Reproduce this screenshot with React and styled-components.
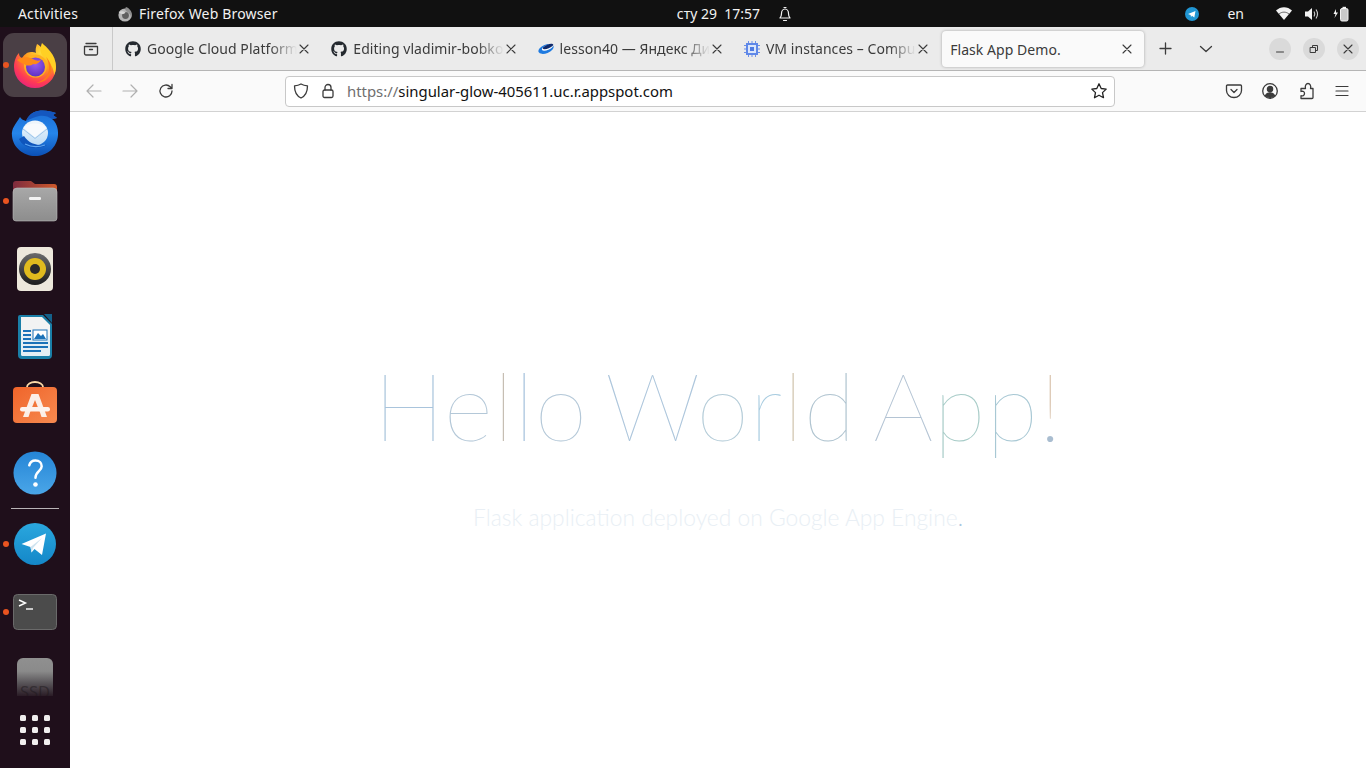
import React from 'react';
import styled, { createGlobalStyle } from 'styled-components';
import { FaGithub } from 'react-icons/fa';

const UI_FONT = '"Noto Sans", "Open Sans", sans-serif';

const GlobalStyle = createGlobalStyle`
  html, body {
    margin: 0;
    padding: 0;
    height: 100%;
    overflow: hidden;
    background: #fff;
    font-family: ${UI_FONT};
  }
  #root { height: 100%; }
  * { box-sizing: border-box; }
`;

const Screen = styled.div`
  width: 1366px;
  height: 768px;
  display: flex;
  flex-direction: column;
`;

const TopBar = styled.div`
  height: 27px;
  flex: none;
  background: #111;
  color: #f2f2f2;
  display: grid;
  grid-template-columns: 1fr auto 1fr;
  align-items: center;
  font-size: 14px;
`;

const TopLeft = styled.div`
  display: flex;
  align-items: center;
  padding-left: 18px;
  letter-spacing: 0.17px;
`;

const Activities = styled.span`
  width: 99px;
`;

const AppMenu = styled.span`
  display: flex;
  align-items: center;
  gap: 6px;
`;

const Clock = styled.div`
  display: flex;
  align-items: center;
  gap: 17px;
  padding-left: 104px;
`;

const TopRight = styled.div`
  display: flex;
  align-items: center;
  justify-content: flex-end;
  padding-right: 17px;
`;

const Lang = styled.span`
  margin: 0 32px 0 28px;
`;

const TrayGap = styled.span`
  display: flex;
  margin-left: ${(p) => p.$left || 0}px;
`;

const Body = styled.div`
  flex: 1;
  display: flex;
  min-height: 0;
`;

const Dock = styled.div`
  width: 70px;
  flex: none;
  background: #1f0f1b;
  padding-top: 4px;
  display: flex;
  flex-direction: column;
  align-items: center;
`;

const DockItem = styled.div`
  position: relative;
  width: 70px;
  height: ${(p) => p.$height || 68}px;
  flex: none;
  display: flex;
  align-items: ${(p) => p.$align || 'center'};
  justify-content: center;
  overflow: hidden;
`;

const ActiveTile = styled.div`
  width: 64px;
  height: 64px;
  border-radius: 11px;
  background: #4a3f45;
  display: flex;
  align-items: center;
  justify-content: center;
`;

const RunDot = styled.span`
  position: absolute;
  left: 3px;
  top: 50%;
  width: 6px;
  height: 6px;
  margin-top: -3px;
  border-radius: 50%;
  background: #e95420;
`;

const DockSep = styled.div`
  width: 48px;
  height: 1px;
  margin: 1px 0 1px;
  flex: none;
  background: #b9b4b7;
`;

const AppGrid = styled.div`
  display: grid;
  grid-template-columns: repeat(3, 6px);
  gap: 6px;
  & > span {
    width: 6px;
    height: 6px;
    border-radius: 1.5px;
    background: #f0eeee;
  }
`;

const SsdTile = styled.div`
  width: 36px;
  height: 38px;
  margin-top: 12px;
  border-radius: 6px 6px 0 0;
  background: linear-gradient(#909090 0%, #8a8a8a 35%, #5a565a 65%, #2a1c26 100%);
  color: rgba(30, 24, 28, 0.5);
  font-size: 16.5px;
  line-height: 20px;
  padding: 24px 0 0 3px;
  white-space: nowrap;
  overflow: hidden;
`;

const Browser = styled.div`
  flex: 1;
  min-width: 0;
  display: flex;
  flex-direction: column;
`;

const TabBar = styled.div`
  height: 44px;
  flex: none;
  background: #ebebeb;
  border-bottom: 1px solid #b5b5b5;
  display: flex;
  align-items: center;
  color: #3b3b3b;
  font-size: 14px;
`;

const ViewButton = styled.div`
  width: 43px;
  height: 43px;
  flex: none;
  border-right: 1px solid #c9c9c9;
  display: flex;
  align-items: center;
  justify-content: center;
`;

const TabList = styled.div`
  display: flex;
  padding-left: 5px;
  height: 43px;
`;

const Tab = styled.div`
  width: 206.3px;
  flex: none;
  display: flex;
  align-items: center;
  padding: 0 15px 0 7px;
  gap: 6px;
  position: relative;
`;

const ActiveTab = styled(Tab)`
  width: 202px;
  height: 36px;
  margin: 4px 0 0 -1px;
  padding: 0 12px 0 8px;
  background: #fafafa;
  border-radius: 4px;
  box-shadow: 0 0 3px rgba(0, 0, 0, 0.3);
`;

const TabTitle = styled.span`
  flex: 1;
  min-width: 0;
  margin-right: ${(p) => (p.$fade ? -4 : 0)}px;
  white-space: nowrap;
  overflow: hidden;
  letter-spacing: 0.05px;
  -webkit-mask-image: ${(p) =>
    p.$fade ? 'linear-gradient(to right, #000 82%, transparent 100%)' : 'none'};
  mask-image: ${(p) =>
    p.$fade ? 'linear-gradient(to right, #000 82%, transparent 100%)' : 'none'};
`;

const Favicon = styled.span`
  width: 16px;
  height: 16px;
  flex: none;
  display: flex;
  align-items: center;
  justify-content: center;
  color: #24292f;
`;

const TabActions = styled.div`
  display: flex;
  align-items: center;
  margin-left: 15px;
  gap: 27px;
`;

const WindowButtons = styled.div`
  margin-left: auto;
  padding-right: 7px;
  display: flex;
  gap: 12px;
`;

const WinButton = styled.span`
  width: 22px;
  height: 22px;
  border-radius: 50%;
  background: #dadada;
  display: flex;
  align-items: center;
  justify-content: center;
`;

const Toolbar = styled.div`
  height: 41px;
  flex: none;
  background: #fafafa;
  border-bottom: 1px solid #d2d2d2;
  display: flex;
  align-items: center;
  padding-left: 15px;
`;

const NavButtons = styled.div`
  display: flex;
  align-items: center;
  gap: 18px;
  width: 200px;
`;

const UrlBar = styled.div`
  width: 830px;
  height: 31px;
  background: #fff;
  border: 1px solid #c8c8c8;
  border-radius: 4px;
  display: flex;
  align-items: center;
  padding: 0 6px;
  font-size: 14.9px;
`;

const UrlIcons = styled.span`
  display: flex;
  align-items: center;
  gap: 10px;
  margin-right: 11px;
`;

const UrlText = styled.span`
  flex: 1;
  color: #111;
`;

const UrlScheme = styled.span`
  color: #6f6f6f;
`;

const ToolRight = styled.div`
  display: flex;
  align-items: center;
  gap: 18px;
  margin-left: 110px;
`;

const Page = styled.main`
  flex: 1;
  background: #fff;
  display: flex;
  flex-direction: column;
  align-items: center;
  padding: 236px 0 0 0;
  font-family: Lato, sans-serif;
`;

const Heading = styled.h1`
  margin: 0;
  font-size: 95px;
  line-height: 113px;
  font-weight: 100;
  letter-spacing: 0.8px;
  word-spacing: -8px;
  white-space: nowrap;
`;

const Letter = styled.span`
  color: ${(p) => p.$color};
`;

const Bang = styled.span`
  color: transparent;
  background: linear-gradient(#dcc8b4 68%, #a9bdd0 68%);
  -webkit-background-clip: text;
  background-clip: text;
`;

const Subtitle = styled.p`
  margin: 42px 0 0;
  font-size: 22.8px;
  line-height: 29px;
  font-weight: 300;
  color: #e9eff5;
  white-space: nowrap;
`;

const Dot = styled.span`
  color: #a9c6e0;
`;

const Ico = ({ size = 16, children, vb = '0 0 16 16', color = '#3b3b3b', sw = 1.3 }) => (
  <svg width={size} height={size} viewBox={vb} fill="none" stroke={color} strokeWidth={sw} strokeLinecap="round" strokeLinejoin="round">
    {children}
  </svg>
);

const CloseX = ({ color = '#3b3b3b' }) => (
  <Ico size={10} vb="0 0 10 10" color={color} sw={1.1}>
    <path d="M1 1l8 8M9 1l-8 8" />
  </Ico>
);

const Firefox = ({ size = 48 }) => (
  <svg width={size} height={size} viewBox="0 0 48 48">
    <defs>
      <radialGradient id="ffBody" cx="0.65" cy="0.2" r="0.95">
        <stop offset="0" stopColor="#ffde3a" />
        <stop offset="0.4" stopColor="#ff9a1f" />
        <stop offset="0.72" stopColor="#ff3a55" />
        <stop offset="1" stopColor="#d9188f" />
      </radialGradient>
      <radialGradient id="ffGlobe" cx="0.5" cy="0.35" r="0.7">
        <stop offset="0" stopColor="#9a5cf0" />
        <stop offset="1" stopColor="#5b2fc0" />
      </radialGradient>
    </defs>
    <path d="M26 3c5 3 6 6 9 8 6 4 10 9 10 15a21 21 0 1 1-42 0c0-6 2-11 5-14 0 3 1 4 3 5 2-3 5-6 9-6 2 0 4 0 5 1-1-3 0-6 1-9z" fill="url(#ffBody)" />
    <path d="M31 2c4 4 14 11 14 24 0 3-1 6-2 8 0-9-6-14-11-19-3-3-3-8-1-13z" fill="#ffd024" />
    <circle cx="24.5" cy="25" r="11.5" fill="#ffb11f" />
    <circle cx="24.5" cy="26" r="9.5" fill="url(#ffGlobe)" />
    <path d="M6 19c4-3 11-4 16-1 3 2 5 2 8 1-2 3-5 5-8 4-2 2-6 2-9 0-2-1-5-2-7-4z" fill="#ff8a18" />
    <path d="M35 16c4 4 6 9 5 15-2 7-8 11-15 11 8-2 13-8 13-15 0-4-1-8-3-11z" fill="#ff7a1c" />
  </svg>
);

const MiniFirefox = () => (
  <svg width={16} height={16} viewBox="0 0 16 16">
    <circle cx="8" cy="9" r="6.6" fill="#b5b5b5" />
    <path d="M9 1c3 1 6 4 6 8 0 1-1 3-1 3 0-4-3-6-5-7-1-1-1-3 0-4z" fill="#8e8e8e" />
    <circle cx="8.5" cy="9.5" r="3.4" fill="#5f5f5f" />
    <path d="M1.5 6c2-1 5-1 7 .5-1 1.5-3 2-5 1z" fill="#d6d6d6" />
  </svg>
);

const Thunderbird = () => (
  <svg width={50} height={50} viewBox="0 0 50 50">
    <defs>
      <linearGradient id="tbBody" x1="0" y1="0" x2="0" y2="1">
        <stop offset="0" stopColor="#1c6fd6" />
        <stop offset="0.5" stopColor="#2585ea" />
        <stop offset="1" stopColor="#0b50b6" />
      </linearGradient>
      <linearGradient id="tbMail" x1="0" y1="0" x2="0" y2="1">
        <stop offset="0" stopColor="#f2f7fb" />
        <stop offset="1" stopColor="#bcdcf6" />
      </linearGradient>
    </defs>
    <path d="M10 9C6 16 1 20 2 28c1 12 12 20 23 20 12 0 22-8 23-21 .5-7-2-13-6-16l5-1-4-3 3-2c-6-2-12-3-18-2-6 1-10 5-12 10-3-1-5-2-6-4z" fill="url(#tbBody)" />
    <path d="M16 13c2-5 6-9 12-10 6-1 12 0 18 2l-3 2 4 3-5 1c-4-3-9-4-13-3-5 1-9 3-13 5z" fill="#1457bf" />
    <ellipse cx="25" cy="25" rx="13" ry="12.5" fill="url(#tbMail)" />
    <path d="M13.500 20C17 14 33 14 36.500 20L25 29.500z" fill="#f7fafd" />
    <path d="M13 21l12 9.500L37 21" fill="none" stroke="#9fc6ea" strokeWidth="1" />
    <path d="M9 31c4 9 17 12 28 6-9 1-18-1-23-9z" fill="#0f55bc" />
    <path d="M15 36c6 3 14 3 20 1" fill="none" stroke="#5fa8f2" strokeWidth="1.200" />
  </svg>
);

const Files = () => (
  <svg width={46} height={42} viewBox="0 0 46 42">
    <defs>
      <linearGradient id="fld" x1="0" y1="0" x2="1" y2="0">
        <stop offset="0" stopColor="#7e2b3e" />
        <stop offset="1" stopColor="#cf5a2c" />
      </linearGradient>
      <linearGradient id="fldBody" x1="0" y1="0" x2="0" y2="1">
        <stop offset="0" stopColor="#a8a8a8" />
        <stop offset="1" stopColor="#8d8d8d" />
      </linearGradient>
    </defs>
    <path d="M1 4a3 3 0 0 1 3-3h15l4 3h19a3 3 0 0 1 3 3v8H1z" fill="url(#fld)" />
    <path d="M1 12a4 4 0 0 1 4-4h36a4 4 0 0 1 4 4v26a3 3 0 0 1-3 3H4a3 3 0 0 1-3-3z" fill="url(#fldBody)" stroke="#bdbdbd" strokeWidth="0.6" />
    <rect x="17" y="17" width="12" height="3" rx="1.2" fill="#f4f4f4" />
  </svg>
);

const Rhythmbox = () => (
  <svg width={36} height={44} viewBox="0 0 36 44">
    <defs>
      <linearGradient id="rbRing" x1="0" y1="0" x2="0" y2="1">
        <stop offset="0" stopColor="#6b6b6b" />
        <stop offset="1" stopColor="#1d1d1d" />
      </linearGradient>
    </defs>
    <rect width="36" height="44" rx="4" fill="#ede8dc" />
    <circle cx="18" cy="22" r="16" fill="url(#rbRing)" />
    <circle cx="18" cy="22" r="11" fill="#e0bb1e" />
    <circle cx="18" cy="22" r="5" fill="#2a2a2a" />
  </svg>
);

const Writer = () => (
  <svg width={36} height={46} viewBox="0 0 36 46">
    <path d="M3 1h23l9 9v31a4 4 0 0 1-4 4H5a4 4 0 0 1-4-4V3a2 2 0 0 1 2-2z" fill="#1a7fa8" />
    <path d="M4 3h21l8 8v29a2 2 0 0 1-2 2H6a2 2 0 0 1-2-2z" fill="#f2f3f3" />
    <path d="M4 22h29v18a2 2 0 0 1-2 2H6a2 2 0 0 1-2-2z" fill="#e4eef4" />
    <path d="M27 0h8v9z" fill="#14618a" />
    <g fill="#1b72b8">
      <rect x="6" y="16" width="8" height="2" />
      <rect x="6" y="20" width="8" height="2" />
      <rect x="6" y="24" width="8" height="2" />
      <rect x="6" y="28" width="25" height="2" />
      <rect x="6" y="32" width="25" height="2" />
      <rect x="6" y="36" width="18" height="2" />
    </g>
    <rect x="16" y="16" width="14" height="10" fill="#fff" stroke="#1b72b8" strokeWidth="1" />
    <path d="M17 25l4-6 3 3 2-2 3 5z" fill="#1b72b8" />
  </svg>
);

const Software = () => (
  <svg width={46} height={48} viewBox="0 0 46 48">
    <defs>
      <linearGradient id="swBg" x1="0" y1="0" x2="1" y2="1">
        <stop offset="0" stopColor="#f0642a" />
        <stop offset="1" stopColor="#f68a50" />
      </linearGradient>
    </defs>
    <path d="M15 7V6a8 5 0 0 1 16 0v1" fill="none" stroke="#fad9a8" strokeWidth="1.800" />
    <rect x="1" y="6" width="44" height="36" rx="4" fill="url(#swBg)" />
    <path d="M19.500 13h7L35 36h-5.500l-2-6h-9l-2 6H11z" fill="#fbeee7" />
    <path d="M23 19l-2.800 7h5.600z" fill="#f2763a" />
    <rect x="8" y="26" width="30" height="4.500" rx="2.200" fill="#fdf3ee" />
  </svg>
);

const Help = () => (
  <svg width={44} height={44} viewBox="0 0 46 46">
    <defs>
      <linearGradient id="hpBg" x1="0" y1="0" x2="0" y2="1">
        <stop offset="0" stopColor="#2585d6" />
        <stop offset="1" stopColor="#4aa6e8" />
      </linearGradient>
    </defs>
    <circle cx="23" cy="23" r="22.500" fill="url(#hpBg)" />
    <path d="M17 15c1-4 4-5 6.500-5 4 0 6.500 2.500 6.500 6 0 5-6.500 5.500-6.500 12" fill="none" stroke="#fff" strokeWidth="2.600" strokeLinecap="round" />
    <circle cx="23.500" cy="35" r="2.400" fill="#fff" />
  </svg>
);

const TelegramDock = () => (
  <svg width={42} height={42} viewBox="0 0 42 42">
    <defs>
      <linearGradient id="tgBg" x1="0" y1="0" x2="0" y2="1">
        <stop offset="0" stopColor="#2aa7de" />
        <stop offset="1" stopColor="#1487c8" />
      </linearGradient>
    </defs>
    <circle cx="21" cy="21" r="21" fill="url(#tgBg)" />
    <path d="M7.500 21L32 10.500 28 32 20.500 26 17.500 29.500 16.500 24z" fill="#fff" />
    <path d="M16.500 24L28 15 19 25 17.500 29.500z" fill="#cfe4f0" />
  </svg>
);

const Terminal = () => (
  <svg width={44} height={36} viewBox="0 0 44 36">
    <rect x="0.500" y="0.500" width="43" height="35" rx="4" fill="#4b4b4b" stroke="#6a6a6a" />
    <path d="M6 6l6.500 3L6 12" fill="none" stroke="#fff" strokeWidth="1.400" />
    <path d="M13 15h7" stroke="#fff" strokeWidth="1.400" />
  </svg>
);

const TelegramTray = () => (
  <svg width={14} height={14} viewBox="0 0 14 14">
    <circle cx="7" cy="7" r="7" fill="#2196d3" />
    <path d="M3 7l7.500-3-1.200 6.500L7 8.800 6 10 5.600 8z" fill="#fff" />
  </svg>
);

const Bell = () => (
  <Ico size={16} color="#f2f2f2" sw={1.2}>
    <path d="M3 12c1-1 1.500-2 1.500-4.500C4.500 5 6 3 8 3s3.500 2 3.500 4.500C11.500 10 12 11 13 12z" />
    <path d="M7 1.500h2M6.500 14.500h3" />
  </Ico>
);

const Wifi = () => (
  <svg width={16} height={13} viewBox="0 0 16 13">
    <path d="M0 3.500C4.500-1 11.500-1 16 3.500L8 13z" fill="#f2f2f2" />
    <path d="M3 7c3-2.500 7-2.500 10 0" fill="none" stroke="#111" strokeWidth="0.600" />
  </svg>
);

const Volume = () => (
  <svg width={16} height={14} viewBox="0 0 16 14">
    <path d="M1 4.500h3L8 1v12L4 9.500H1z" fill="#f2f2f2" />
    <path d="M10 4.500c1 1.500 1 3.500 0 5M12 2.500c2 3 2 6 0 9" fill="none" stroke="#d0d0d0" strokeWidth="1.100" />
  </svg>
);

const Battery = () => (
  <svg width={16} height={16} viewBox="0 0 16 16">
    <path d="M3 3L0.500 8H2.500L1.500 12 5 6.500H3z" fill="#f2f2f2" />
    <rect x="7.500" y="2.500" width="7.500" height="12.500" rx="1.500" fill="#c9c9c9" stroke="#f2f2f2" />
    <rect x="9.500" y="0.800" width="3.500" height="1.500" fill="#f2f2f2" />
  </svg>
);

const YandexDisk = () => (
  <svg width={16} height={12} viewBox="0 0 16 12">
    <ellipse cx="8" cy="6" rx="8" ry="4.200" transform="rotate(-22 8 6)" fill="#1e7ae0" />
    <ellipse cx="9.500" cy="4.500" rx="6" ry="2.400" transform="rotate(-22 9.500 4.500)" fill="#fff" />
    <ellipse cx="10" cy="3.500" rx="5.600" ry="1.800" transform="rotate(-22 10 3.500)" fill="#102a6c" />
  </svg>
);

const ChipIcon = () => (
  <svg width={16} height={16} viewBox="0 0 16 16">
    <g stroke="#6d8fe8" strokeWidth="1">
      <path d="M4.500 0v16M8 0v16M11.500 0v16M0 4.500h16M0 8h16M0 11.500h16" />
    </g>
    <rect x="2" y="2" width="12" height="12" fill="#5f88e8" />
    <rect x="4" y="4" width="8" height="8" fill="#dbe6fb" />
    <rect x="6" y="6" width="4" height="4" fill="#4f7be2" />
  </svg>
);

const tabs = [
  { title: 'Google Cloud Platform', icon: <FaGithub size={16} /> },
  { title: 'Editing vladimir-bobko', icon: <FaGithub size={16} /> },
  { title: 'lesson40 — Яндекс Диск', icon: <YandexDisk /> },
  { title: 'VM instances – Compute', icon: <ChipIcon /> },
];

const heading = [
  ['H', '#a9c4dc'], ['e', '#b4c8d8'], ['l', '#c4bcb0'], ['l', '#a4c0dc'], ['o', '#b4c8d8'],
  [' ', '#fff'], ['W', '#adc6dc'], ['o', '#b4ccd8'], ['r', '#a8cce0'], ['l', '#d0c4ac'], ['d', '#b0c4d0'],
  [' ', '#fff'], ['A', '#b4c4d4'], ['p', '#a8ccc8'], ['p', '#a8c8d4'],
];

export default function App() {
  return (
    <Screen>
      <GlobalStyle />
      <TopBar>
        <TopLeft>
          <Activities>Activities</Activities>
          <AppMenu>
            <MiniFirefox />
            Firefox Web Browser
          </AppMenu>
        </TopLeft>
        <Clock>
          <span>сту 29 &nbsp;17:57</span>
          <Bell />
        </Clock>
        <TopRight>
          <TelegramTray />
          <Lang>en</Lang>
          <Wifi />
          <TrayGap $left={12}><Volume /></TrayGap>
          <TrayGap $left={13}><Battery /></TrayGap>
        </TopRight>
      </TopBar>
      <Body>
        <Dock>
          <DockItem>
            <ActiveTile><Firefox /></ActiveTile>
            <RunDot />
          </DockItem>
          <DockItem><Thunderbird /></DockItem>
          <DockItem><Files /><RunDot /></DockItem>
          <DockItem><Rhythmbox /></DockItem>
          <DockItem><Writer /></DockItem>
          <DockItem><Software /></DockItem>
          <DockItem><Help /></DockItem>
          <DockSep />
          <DockItem><TelegramDock /><RunDot /></DockItem>
          <DockItem><Terminal /><RunDot /></DockItem>
          <DockItem $height={50} $align="flex-start"><SsdTile>SSD</SsdTile></DockItem>
          <DockItem>
            <AppGrid>
              {Array.from({ length: 9 }).map((_, i) => <span key={i} />)}
            </AppGrid>
          </DockItem>
        </Dock>
        <Browser>
          <TabBar>
            <ViewButton>
              <Ico size={16}>
                <path d="M3 2.500h10M1.500 5.500h13v7a1.500 1.500 0 0 1-1.500 1.500H3a1.500 1.500 0 0 1-1.500-1.500zM6.500 8.500h3" />
              </Ico>
            </ViewButton>
            <TabList>
              {tabs.map((t) => (
                <Tab key={t.title}>
                  <Favicon>{t.icon}</Favicon>
                  <TabTitle $fade>{t.title}</TabTitle>
                  <CloseX />
                </Tab>
              ))}
              <ActiveTab>
                <TabTitle>Flask App Demo.</TabTitle>
                <CloseX />
              </ActiveTab>
            </TabList>
            <TabActions>
              <Ico size={13} vb="0 0 13 13">
                <path d="M6.500 1v11M1 6.500h11" />
              </Ico>
              <Ico size={14} vb="0 0 14 14">
                <path d="M1.500 4.500L7 9.500l5.500-5" />
              </Ico>
            </TabActions>
            <WindowButtons>
              <WinButton>
                <Ico size={10} vb="0 0 10 10" sw={1}><path d="M1.500 8h7" /></Ico>
              </WinButton>
              <WinButton>
                <Ico size={10} vb="0 0 10 10" sw={1}>
                  <path d="M1.500 3.500h5v5h-5zM3.500 3.500v-2h5v5h-2" />
                </Ico>
              </WinButton>
              <WinButton>
                <CloseX />
              </WinButton>
            </WindowButtons>
          </TabBar>
          <Toolbar>
            <NavButtons>
              <Ico size={18} vb="0 0 18 18" color="#b0b0b0" sw={1.2}>
                <path d="M16 9H2M8 3L2 9l6 6" />
              </Ico>
              <Ico size={18} vb="0 0 18 18" color="#b0b0b0" sw={1.2}>
                <path d="M2 9h14M10 3l6 6-6 6" />
              </Ico>
              <Ico size={18} vb="0 0 18 18" sw={1.3}>
                <path d="M15 9a6 6 0 1 1-1.800-4.300L15 6.500M15 2.500v4h-4" />
              </Ico>
            </NavButtons>
            <UrlBar>
              <UrlIcons>
                <Ico size={18} vb="0 0 18 18">
                  <path d="M9 2c2 1.200 4 1.700 6.500 1.800C15.500 10 13.500 14 9 16 4.500 14 2.500 10 2.500 3.800 5 3.700 7 3.200 9 2z" />
                </Ico>
                <Ico size={16}>
                  <rect x="3" y="7" width="10" height="7.500" rx="1.500" />
                  <path d="M5 7V4.500a3 3 0 0 1 6 0V7" />
                </Ico>
              </UrlIcons>
              <UrlText>
                <UrlScheme>https://</UrlScheme>singular-glow-405611.uc.r.appspot.com
              </UrlText>
              <Ico size={18} vb="0 0 18 18" color="#222">
                <path d="M9 1.800l2.200 4.700 5 .6-3.700 3.500 1 5.100L9 13.200l-4.500 2.500 1-5.100L1.800 7.100l5-.6z" />
              </Ico>
            </UrlBar>
            <ToolRight>
              <Ico size={18} vb="0 0 18 18">
                <path d="M2.500 3h13a1 1 0 0 1 1 1v4.500a7.500 7 0 0 1-15 0V4a1 1 0 0 1 1-1z" />
                <path d="M6 7.500l3 3 3-3" />
              </Ico>
              <Ico size={18} vb="0 0 18 18">
                <circle cx="9" cy="9" r="7.300" />
                <circle cx="9" cy="7" r="2.600" fill="#3b3b3b" />
                <path d="M4.500 13.500c1-2 2.800-2.700 4.500-2.700s3.500.7 4.500 2.700a6.500 6.500 0 0 1-9 0z" fill="#3b3b3b" />
              </Ico>
              <Ico size={18} vb="0 0 18 18">
                <path d="M4 16.500h11a1 1 0 0 0 1-1V6.500h-2.500c.8-2.500-.5-5-2.500-5s-3.200 2.500-2.500 5H4v3c2-.8 3.500.3 3.500 2s-1.500 3-3.500 2.200z" />
              </Ico>
              <Ico size={18} vb="0 0 18 18" sw={1.2}>
                <path d="M3 4.500h12M3 9h12M3 13.500h12" />
              </Ico>
            </ToolRight>
          </Toolbar>
          <Page>
            <Heading>
              {heading.map(([c, col], i) => (
                <Letter key={i} $color={col}>{c}</Letter>
              ))}
              <Bang>!</Bang>
            </Heading>
            <Subtitle>
              Flask application deployed on Google App Engine<Dot>.</Dot>
            </Subtitle>
          </Page>
        </Browser>
      </Body>
    </Screen>
  );
}
